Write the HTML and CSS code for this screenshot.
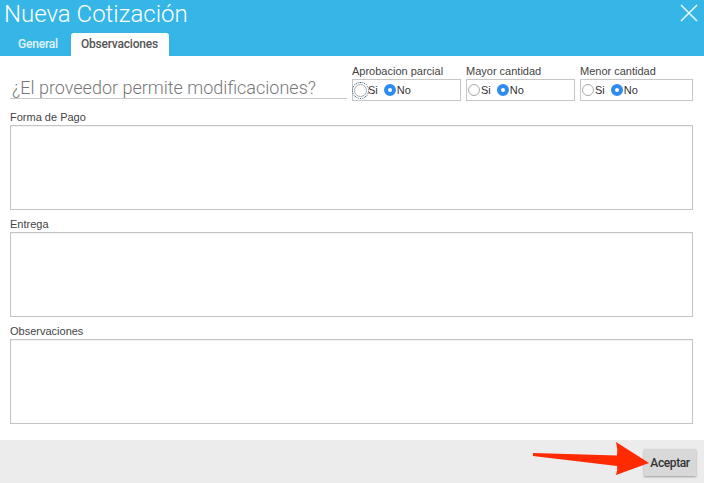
FILE: index.html
```html
<!DOCTYPE html>
<html lang="es">
<head>
    <meta charset="UTF-8">
    <title>Nueva Cotización</title>
    <link rel="stylesheet" href="styles.css">
</head>
<body>
    <div class="dialog">
        <div class="header">
            <div class="title-row">
                <h1>Nueva Cotización</h1>
                <svg class="close" width="18" height="18" viewBox="0 0 18 18">
                    <path d="M1 1 L17 17 M17 1 L1 17" stroke="#e8f6fc" stroke-width="1.6" fill="none"/>
                </svg>
            </div>
            <div class="tabs">
                <div class="tab">General</div>
                <div class="tab active">Observaciones</div>
            </div>
        </div>

        <div class="content">
            <div class="question-row">
                <div class="question">¿El proveedor permite modificaciones?</div>
                <div class="radio-group">
                    <label class="group-label">Aprobacion parcial</label>
                    <div class="radio-box">
                        <span class="radio focused"></span><span class="opt">Si</span>
                        <span class="radio checked"></span><span class="opt">No</span>
                    </div>
                </div>
                <div class="radio-group">
                    <label class="group-label">Mayor cantidad</label>
                    <div class="radio-box">
                        <span class="radio"></span><span class="opt">Si</span>
                        <span class="radio checked"></span><span class="opt">No</span>
                    </div>
                </div>
                <div class="radio-group wide">
                    <label class="group-label">Menor cantidad</label>
                    <div class="radio-box">
                        <span class="radio"></span><span class="opt">Si</span>
                        <span class="radio checked"></span><span class="opt">No</span>
                    </div>
                </div>
            </div>

            <label class="field-label">Forma de Pago</label>
            <textarea class="field"></textarea>

            <label class="field-label">Entrega</label>
            <textarea class="field"></textarea>

            <label class="field-label">Observaciones</label>
            <textarea class="field"></textarea>
        </div>

        <div class="footer">
            <svg class="arrow" width="125" height="43" viewBox="0 0 125 43">
                <path d="M3 13 L87 15.5 Q88 9 86 2 L119 23 L86 35 Q88 30 87 26 L3 16 Z" fill="#ff2a00"/>
            </svg>
            <button class="btn">Aceptar</button>
        </div>
    </div>
</body>
</html>
```

FILE: styles.css
```css
body {
    margin: 0;
    padding: 0;
    background-color: #fff;
    font-family: 'Liberation Sans', Arial, sans-serif;
}

.dialog {
    width: 704px;
    height: 483px;
    display: flex;
    flex-direction: column;
}

.header {
    background-color: #35b6e6;
    height: 56px;
    display: flex;
    flex-direction: column;
    justify-content: space-between;
}

.title-row {
    display: flex;
    justify-content: space-between;
    align-items: flex-start;
}

h1 {
    margin: 0;
    padding: 0 0 0 4px;
    font-family: Roboto, sans-serif;
    font-weight: 300;
    font-size: 24px;
    line-height: 28px;
    color: #fff;
}

.close {
    margin: 4px 6px 0 0;
}

.tabs {
    display: flex;
    padding-left: 8px;
    gap: 3px;
}

.tab {
    font-family: Roboto, sans-serif;
    font-weight: 500;
    font-size: 12px;
    letter-spacing: -0.2px;
    color: #e2f4fb;
    padding: 5px 10px 5px;
    line-height: 13px;
}

.tab.active {
    background-color: #fff;
    color: #555;
    border-radius: 3px 3px 0 0;
    padding: 5px 11px 5px 10px;
}

.content {
    flex: 1;
    padding: 9px 11px 0 10px;
    display: flex;
    flex-direction: column;
}

.question-row {
    display: flex;
    align-items: flex-end;
    gap: 5px;
    margin-bottom: 10px;
}

.question {
    width: 337px;
    border-bottom: 1px solid #c8c8c8;
    font-family: Roboto, sans-serif;
    font-weight: 300;
    font-size: 18px;
    line-height: 20px;
    color: #777;
    padding-left: 2px;
    box-sizing: border-box;
    margin-bottom: 2px;
}

.radio-group {
    display: flex;
    flex-direction: column;
    width: 109px;
}

.radio-group.wide {
    width: 113px;
}

.group-label {
    font-size: 11px;
    color: #444;
    line-height: 13px;
    margin-bottom: 1px;
}

.radio-box {
    border: 1px solid #c6c6c6;
    height: 20px;
    display: flex;
    align-items: center;
    font-size: 11px;
    color: #333;
}

.radio {
    width: 12px;
    height: 12px;
    border: 1px solid #aaa;
    border-radius: 50%;
    background-color: #fff;
    margin-left: 1px;
    box-sizing: border-box;
}

.radio.focused {
    width: 13px;
    height: 13px;
    outline: 1px dotted #2f4f6f;
    outline-offset: 1px;
}

.radio.checked {
    border: 4px solid #2e8cf0;
    background-color: #fff;
    margin-left: 6px;
}

.opt {
    margin-left: 1px;
}

.field-label {
    font-size: 11px;
    color: #444;
    line-height: 13px;
    margin-bottom: 1px;
}

.field {
    height: 85px;
    border: 1px solid #c4c4c4;
    box-sizing: border-box;
    resize: none;
    margin: 0 0 8px 0;
    box-shadow: inset 0 1px 1px rgba(0, 0, 0, 0.05);
}

.footer {
    position: relative;
    height: 43px;
    background-color: #ececec;
    display: flex;
    justify-content: flex-end;
    align-items: center;
    padding-right: 8px;
}

.btn {
    font-family: Roboto, sans-serif;
    font-weight: 500;
    font-size: 12px;
    letter-spacing: -0.4px;
    color: #333;
    background-color: #d8d8d8;
    border: none;
    width: 52px;
    height: 27px;
    box-shadow: 0 1px 2px rgba(0, 0, 0, 0.35);
    padding: 0;
    margin-top: 2px;
}

.arrow {
    position: absolute;
    left: 530px;
    top: 0;
}
```
